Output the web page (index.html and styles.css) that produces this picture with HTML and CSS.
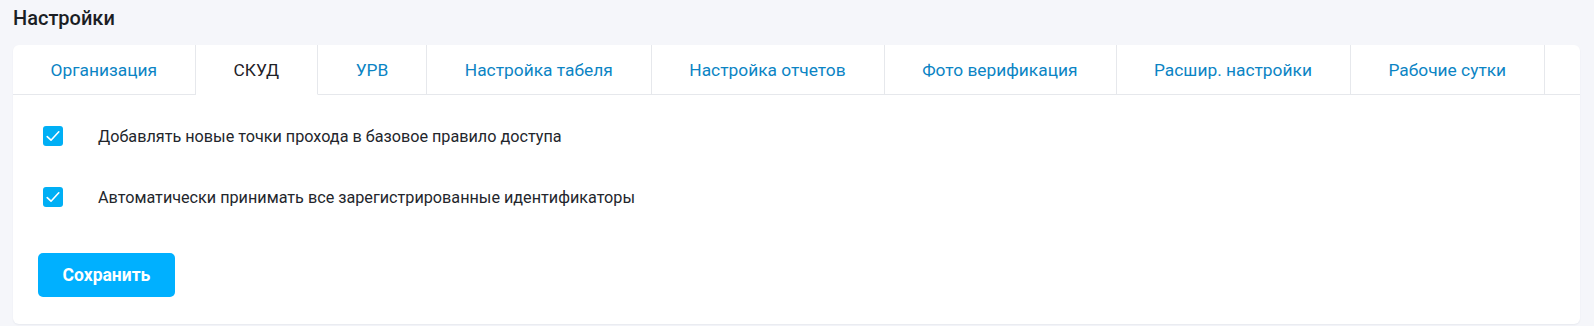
FILE: index.html
```html
<!DOCTYPE html>
<html lang="ru">
<head>
    <meta charset="UTF-8">
    <meta name="viewport" content="width=device-width, initial-scale=1.0">
    <title>Настройки</title>
    <link rel="stylesheet" href="styles.css">
</head>
<body>
    <div class="page">
        <h1 class="pageTitle">Настройки</h1>
        <div class="card">
            <div class="tabs">
                <div class="tab">Организация</div>
                <div class="tab tabActive">СКУД</div>
                <div class="tab">УРВ</div>
                <div class="tab">Настройка табеля</div>
                <div class="tab">Настройка отчетов</div>
                <div class="tab">Фото верификация</div>
                <div class="tab">Расшир. настройки</div>
                <div class="tab">Рабочие сутки</div>
                <div class="tabFiller"></div>
            </div>
            <div class="cardBody">
                <label class="checkRow">
                    <span class="checkBox">
                        <svg width="20" height="20" viewBox="0 0 20 20"><path d="M4.2 10.6 L8 14.2 L15.8 5.8" fill="none" stroke="#fff" stroke-width="1.6" stroke-linecap="round" stroke-linejoin="round"/></svg>
                    </span>
                    <span class="checkLabel">Добавлять новые точки прохода в базовое правило доступа</span>
                </label>
                <label class="checkRow">
                    <span class="checkBox">
                        <svg width="20" height="20" viewBox="0 0 20 20"><path d="M4.2 10.6 L8 14.2 L15.8 5.8" fill="none" stroke="#fff" stroke-width="1.6" stroke-linecap="round" stroke-linejoin="round"/></svg>
                    </span>
                    <span class="checkLabel">Автоматически принимать все зарегистрированные идентификаторы</span>
                </label>
                <div class="actions">
                    <button class="saveButton">Сохранить</button>
                </div>
            </div>
        </div>
    </div>
</body>
</html>
```

FILE: styles.css
```css
html, body {
    font-family: Roboto, "Liberation Sans", sans-serif;
    margin: 0;
    padding: 0;
    background-color: #f5f6fa;
    color: #1f2228;
}
div.page {
    padding: 5px 14px 3px 13px;
}
h1.pageTitle {
    margin: 0;
    font-size: 20px;
    font-weight: 500;
    line-height: 26px;
    height: 40px;
    color: #1b1e24;
}
div.card {
    background-color: #fff;
    border-radius: 6px;
    box-shadow: 0 1px 2px rgba(20, 30, 60, 0.06);
    overflow: hidden;
}
div.tabs {
    display: flex;
    height: 50px;
}
div.tab {
    padding: 0 38px 0 37.5px;
    display: flex;
    align-items: center;
    font-size: 17.35px;
    color: #0b84c4;
    border-right: 1px solid #e6e8ec;
    border-bottom: 1px solid #e6e8ec;
    white-space: nowrap;
}
div.tabActive {
    color: #1f2228;
    border-bottom-color: transparent;
}
div.tabFiller {
    flex: 1;
    border-bottom: 1px solid #e6e8ec;
}
div.cardBody {
    padding: 31px 30px 27px 30px;
    display: flex;
    flex-direction: column;
    gap: 41px;
}
label.checkRow {
    display: flex;
    align-items: center;
    height: 20px;
}
span.checkBox {
    width: 20px;
    height: 20px;
    border-radius: 3px;
    background-color: #00aff5;
    display: flex;
    flex-shrink: 0;
}
span.checkLabel {
    margin-left: 35px;
    font-size: 16.2px;
    color: #23262c;
}
div.actions {
    margin: 5px 0 0 -5px;
}
button.saveButton {
    width: 137px;
    height: 44px;
    border: none;
    border-radius: 5px;
    background-color: #00b0ff;
    color: #fff;
    font-family: Roboto, "Liberation Sans", sans-serif;
    font-size: 17.5px;
    font-weight: 700;
    cursor: pointer;
}
```
